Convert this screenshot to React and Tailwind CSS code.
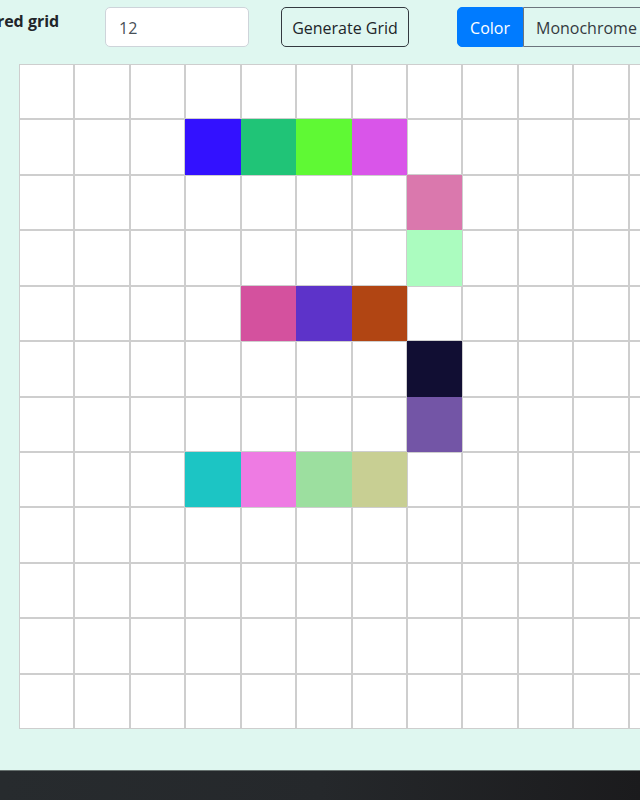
import React from "react";

const colored = {
  "1-3": "#3311ff",
  "1-4": "#20c477",
  "1-5": "#5ff934",
  "1-6": "#d955e9",
  "2-7": "#da78ad",
  "3-7": "#abfcbf",
  "4-4": "#d4519e",
  "4-5": "#5d33c9",
  "4-6": "#b14513",
  "5-7": "#110e33",
  "6-7": "#7355a6",
  "7-3": "#1cc5c4",
  "7-4": "#ee7be3",
  "7-5": "#9cdf9f",
  "7-6": "#c8cf93",
};

export default function App() {
  const cells = [];
  for (let r = 0; r < 12; r++) {
    for (let c = 0; c < 12; c++) {
      const col = colored[`${r}-${c}`];
      cells.push(
        <div
          key={`${r}-${c}`}
          className="border border-[#cecece]"
          style={col ? { backgroundColor: col, borderColor: col } : { backgroundColor: "#ffffff" }}
        />
      );
    }
  }
  return (
    <div
      className="w-[640px] h-[800px] overflow-hidden flex flex-col bg-[#dff7f0]"
      style={{ fontFamily: '"Open Sans", "Noto Sans", sans-serif' }}
    >
      <div className="flex-1 min-h-0 overflow-hidden">
        <div className="flex items-start pt-[7px] whitespace-nowrap">
          <div className="ml-[-38px] w-[143px] shrink-0 pt-[2px] text-[16px] leading-6 font-bold text-[#212529]">
            Colored grid
          </div>
          <div className="w-[144px] h-[40px] shrink-0 rounded-[5px] border border-[#ced4da] bg-white flex items-center px-[13px] pt-[1px] text-[16px] text-[#495057]">
            12
          </div>
          <div className="ml-[32px] w-[128px] h-[40px] shrink-0 rounded-[5px] border border-[#343a40] flex items-center justify-center pt-[1px] text-[16px] text-[#212529]">
            Generate Grid
          </div>
          <div className="ml-[48px] h-[40px] shrink-0 flex">
            <div className="w-[66px] h-full rounded-l-[5px] bg-[#007bff] border border-[#007bff] flex items-center justify-center pt-[1px] text-[16px] text-white">
              Color
            </div>
            <div className="w-[126px] h-full rounded-r-[5px] border border-[#6c757d] flex items-center pl-[12px] pt-[1px] text-[16px] text-[#343a40]">
              Monochrome
            </div>
          </div>
        </div>
        <div className="ml-[19px] mt-[17px] w-[665px] h-[665px] grid grid-cols-12 grid-rows-12">
          {cells}
        </div>
      </div>
      <div className="h-[30px] shrink-0 border-t border-[#66706e] bg-gradient-to-r from-[#272b2e] via-[#25282b] to-[#1b1b1d]" />
    </div>
  );
}
